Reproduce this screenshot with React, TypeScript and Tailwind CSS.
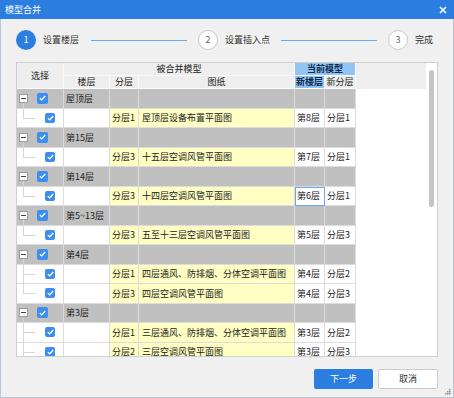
import React from "react";

type Child = { fc: string; tz: string; xl: string; xf: string; focus?: boolean };
type Group = { name: string; children: Child[] };

const GROUPS: Group[] = [
  { name: "屋顶层", children: [{ fc: "分层1", tz: "屋顶层设备布置平面图", xl: "第8层", xf: "分层1" }] },
  { name: "第15层", children: [{ fc: "分层3", tz: "十五层空调风管平面图", xl: "第7层", xf: "分层1" }] },
  { name: "第14层", children: [{ fc: "分层3", tz: "十四层空调风管平面图", xl: "第6层", xf: "分层1", focus: true }] },
  { name: "第5~13层", children: [{ fc: "分层3", tz: "五至十三层空调风管平面图", xl: "第5层", xf: "分层3" }] },
  {
    name: "第4层",
    children: [
      { fc: "分层1", tz: "四层通风、防排烟、分体空调平面图", xl: "第4层", xf: "分层2" },
      { fc: "分层3", tz: "四层空调风管平面图", xl: "第4层", xf: "分层3" },
    ],
  },
  {
    name: "第3层",
    children: [
      { fc: "分层1", tz: "三层通风、防排烟、分体空调平面图", xl: "第3层", xf: "分层2" },
      { fc: "分层2", tz: "三层空调风管平面图", xl: "第3层", xf: "分层3" },
      { fc: "分层3", tz: "三层设备布置平面图", xl: "第3层", xf: "分层1" },
    ],
  },
];

const font = { fontFamily: '"Noto Sans CJK SC", "Noto Sans", sans-serif' };

const Check = ({ size = 11 }: { size?: number }) => (
  <span
    className="flex items-center justify-center rounded-[2px] bg-[#3d8ef0] shrink-0"
    style={{ width: size, height: size }}
  >
    <svg width="7" height="6" viewBox="0 0 7 6">
      <path d="M0.8 3.1 L2.7 4.9 L6.2 1" fill="none" stroke="white" strokeWidth="1.3" />
    </svg>
  </span>
);

const Expand = () => (
  <span className="flex items-center justify-center w-[9px] h-[9px] border border-[#9c9c9c] bg-white shrink-0">
    <span className="w-[5px] h-px bg-[#444]" />
  </span>
);

const cell = "h-full border-r border-b border-[#dcdcdc] flex items-center shrink-0";

const GroupRow = ({ name }: { name: string }) => (
  <div className="flex h-[19.5px] bg-white">
    <div className={`${cell} w-[47px] bg-[#c0c0c0] relative pl-[2px]`}>
      <Expand />
      <span className="ml-[9px]">
        <Check />
      </span>
      <span className="absolute left-[6px] top-[14px] bottom-0 w-px bg-[#d6d6d6]" />
    </div>
    <div className={`${cell} w-[46px] bg-[#c0c0c0] pl-[2px] whitespace-nowrap`}>{name}</div>
    <div className={`${cell} w-[29px] bg-[#c0c0c0]`} />
    <div className={`${cell} w-[156px] bg-[#c0c0c0]`} />
    <div className={`${cell} w-[30px] bg-[#c0c0c0]`} />
    <div className={`${cell} w-[31px] bg-[#c0c0c0]`} />
    <div className="flex-1" />
  </div>
);

const ChildRow = ({ c, last }: { c: Child; last: boolean }) => (
  <div className="flex h-[19.5px] bg-white">
    <div className={`${cell} w-[47px] bg-white relative pl-[28px]`}>
      <span className={`absolute left-[6px] top-0 w-px bg-[#d6d6d6] ${last ? "h-1/2" : "h-full"}`} />
      <span className="absolute left-[6px] top-1/2 w-[12px] h-px bg-[#d6d6d6]" />
      <Check size={10} />
    </div>
    <div className={`${cell} w-[46px] bg-white`} />
    <div className={`${cell} w-[29px] bg-[#ffffc4] pl-[2px] whitespace-nowrap`}>{c.fc}</div>
    <div className={`${cell} w-[156px] bg-[#ffffc4] pl-[3px] whitespace-nowrap overflow-hidden`}>{c.tz}</div>
    <div
      className={`${cell} w-[30px] bg-white pl-[2px] whitespace-nowrap ${
        c.focus ? "outline outline-1 -outline-offset-1 outline-[#6aa6ea]" : ""
      }`}
    >
      {c.xl}
    </div>
    <div className={`${cell} w-[31px] bg-white pl-[2px] whitespace-nowrap`}>{c.xf}</div>
    <div className="flex-1" />
  </div>
);

const Step = ({ n, label, active }: { n: number; label: string; active?: boolean }) => (
  <div className="flex items-center">
    <span
      className={`flex items-center justify-center w-[20px] h-[20px] rounded-full text-[9px] ${
        active ? "bg-[#2b7de0] text-white" : "bg-white border border-[#c9c9c9] text-[#666]"
      }`}
    >
      {n}
    </span>
    <span className="ml-[7px] text-[9px] text-[#333] whitespace-nowrap">{label}</span>
  </div>
);

export default function App() {
  return (
    <div className="w-[454px] h-[398px] flex flex-col bg-[#f0f0f0] text-[9px] text-[#222]" style={font}>
      {/* 标题栏 */}
      <div className="h-[19px] bg-[#2b7de0] flex items-center justify-between px-[5px] text-white shrink-0">
        <span className="text-[9px]">模型合并</span>
        <svg width="8" height="8" viewBox="0 0 8 8" className="mr-[2px]">
          <path d="M1 1 L7 7 M7 1 L1 7" stroke="white" strokeWidth="1.6" />
        </svg>
      </div>

      <div className="flex-1 flex flex-col border-x border-b border-[#b8c6d6]">
        {/* 步骤条 */}
        <div className="flex items-center pl-[15px] pt-[11px] h-[20px] box-content">
          <Step n={1} label="设置楼层" active />
          <span className="ml-[12px] w-[96px] h-px bg-[#6aa8ec]" />
          <span className="ml-[11px]">
            <Step n={2} label="设置插入点" />
          </span>
          <span className="ml-[11px] w-[96px] h-px bg-[#6aa8ec]" />
          <span className="ml-[11px]">
            <Step n={3} label="完成" />
          </span>
        </div>

        {/* 表格 */}
        <div className="ml-[15px] mt-[12px] w-[422px] h-[295px] shrink-0 border border-[#cfcfcf] bg-white flex">
          <div className="flex-1 flex flex-col overflow-hidden">
            <div className="flex h-[26px] shrink-0 bg-[#eeeeee]">
              <div className="w-[47px] h-full border-r border-b border-[#fafafa] flex items-center justify-center">
                选择
              </div>
              <div className="flex flex-col w-[231px]">
                <div className="h-[13px] border-r border-b border-[#fafafa] flex items-center justify-center">
                  被合并模型
                </div>
                <div className="h-[13px] flex">
                  <div className="w-[46px] border-r border-b border-[#fafafa] flex items-center justify-center">楼层</div>
                  <div className="w-[29px] border-r border-b border-[#fafafa] flex items-center justify-center">分层</div>
                  <div className="w-[156px] border-r border-b border-[#fafafa] flex items-center justify-center">图纸</div>
                </div>
              </div>
              <div className="flex flex-col w-[61px]">
                <div className="h-[13px] bg-[#93c5f4] border-r border-b border-[#fafafa] flex items-center justify-center font-bold text-[#0e2a4e]">
                  当前模型
                </div>
                <div className="h-[13px] flex">
                  <div className="w-[30px] bg-[#93c5f4] border-r border-b border-[#fafafa] flex items-center justify-center font-bold text-[#0e2a4e] whitespace-nowrap">
                    新楼层
                  </div>
                  <div className="w-[31px] border-r border-b border-[#fafafa] flex items-center justify-center whitespace-nowrap">
                    新分层
                  </div>
                </div>
              </div>
              <div className="flex-1" />
            </div>

            <div className="flex-1 overflow-hidden">
              {GROUPS.map((g) => (
                <React.Fragment key={g.name}>
                  <GroupRow name={g.name} />
                  {g.children.map((c, i) => (
                    <ChildRow key={i} c={c} last={i === g.children.length - 1} />
                  ))}
                </React.Fragment>
              ))}
            </div>
          </div>

          {/* 滚动条 */}
          <div className="w-[11px] bg-white flex justify-center pt-[7px]">
            <div className="w-[5px] h-[137px] rounded-full bg-[#c6c6c6]" />
          </div>
        </div>

        {/* 按钮 */}
        <div className="flex justify-end gap-[5px] mt-[12px] mr-[15px] shrink-0">
          <button className="w-[59px] h-[20px] rounded-[2px] bg-[#2b7de0] text-white text-[9px]">下一步</button>
          <button className="w-[60px] h-[20px] rounded-[2px] bg-white border border-[#cccccc] text-[#333] text-[9px]">
            取消
          </button>
        </div>

        <div className="flex-1 flex justify-end items-end pr-[2px] pb-[2px]">
          <svg width="6" height="6" viewBox="0 0 6 6">
            <rect x="4" y="0" width="1.5" height="1.5" fill="#8a8a8a" />
            <rect x="2" y="2" width="1.5" height="1.5" fill="#8a8a8a" />
            <rect x="4" y="2" width="1.5" height="1.5" fill="#8a8a8a" />
            <rect x="0" y="4" width="1.5" height="1.5" fill="#8a8a8a" />
            <rect x="2" y="4" width="1.5" height="1.5" fill="#8a8a8a" />
            <rect x="4" y="4" width="1.5" height="1.5" fill="#8a8a8a" />
          </svg>
        </div>
      </div>
    </div>
  );
}
